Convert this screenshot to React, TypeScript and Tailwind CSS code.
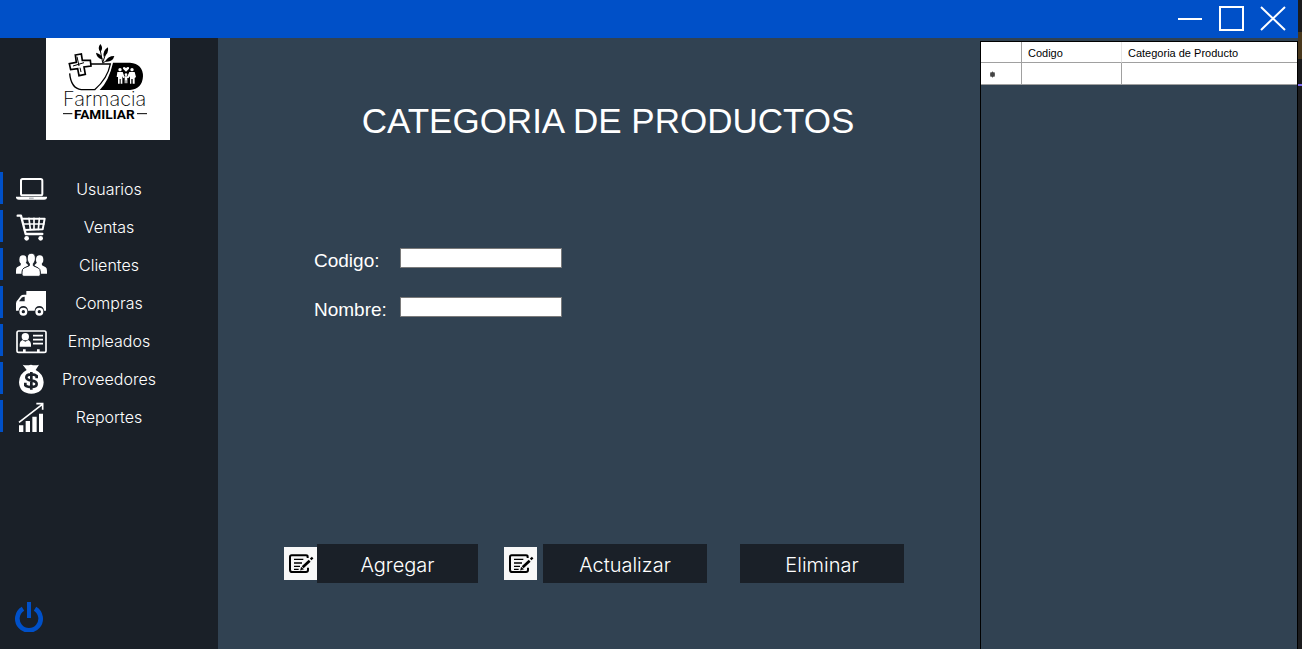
import type { ReactNode } from "react";

function Icon({ children }: { children: ReactNode }) {
  return (
    <svg viewBox="0 0 96 96" className="size-8 shrink-0" fill="#fff" aria-hidden="true">
      {children}
    </svg>
  );
}

const menu: { label: string; icon: ReactNode }[] = [
  {
    label: "Usuarios",
    icon: (
      <>
        <rect x="18" y="21" width="64" height="49" rx="5" fill="none" stroke="#fff" strokeWidth="6" />
        <path d="M3 74H96V77Q95 83 88 83H11Q4 83 3 77Z" />
        <path d="M42 77H56V80H42Z" fill="#9a9fa5" />
      </>
    ),
  },
  {
    label: "Ventas",
    icon: (
      <>
        <g fill="none" stroke="#fff" strokeWidth="7" strokeLinecap="round" strokeLinejoin="round">
          <path d="M8 17H18L32 72H82" />
          <path d="M22 26H89L83 58L29 60" strokeWidth="6" />
          <path d="M25 42H87M42 25L46 58M57 25V58M73 25L70 58" strokeWidth="5" />
        </g>
        <circle cx="35" cy="85" r="7" />
        <circle cx="77" cy="85" r="7" />
      </>
    ),
  },
  {
    label: "Clientes",
    icon: (
      <>
        <ellipse cx="24" cy="35" rx="11" ry="13" />
        <ellipse cx="74" cy="35" rx="11" ry="13" />
        <path d="M18 44L17 52L6 58Q3 61 3 68V77H28V62L40 52L33 45Z" />
        <path d="M80 44L81 52L92 58Q96 61 96 68V77H70V62L58 52L65 45Z" />
        <path
          d="M49 16C39 16 36 24 37 34C38 40 40 44 43 47V53L27 60Q21 63 21 72V81Q21 85 27 85H70Q76 85 76 81V72Q76 63 70 60L55 53V47C58 44 60 40 61 34C62 24 59 16 49 16Z"
          stroke="#1a2028"
          strokeWidth="3"
        />
      </>
    ),
  },
  {
    label: "Compras",
    icon: (
      <>
        <path d="M34 15H93V74H87A14 14 0 0 0 59 74H39A14 14 0 0 0 11 74H3V52Q4 45 8 42L17 30Q20 26 27 26H34Z" />
        <path d="M12 46L20 35Q23 32 29 32V46Z" fill="#1a2028" />
        <path
          fillRule="evenodd"
          d="M25 65A12 12 0 1 0 25 89A12 12 0 1 0 25 65ZM25 72A5 5 0 1 1 25 82A5 5 0 1 1 25 72ZM73 65A12 12 0 1 0 73 89A12 12 0 1 0 73 65ZM73 72A5 5 0 1 1 73 82A5 5 0 1 1 73 72Z"
        />
      </>
    ),
  },
  {
    label: "Empleados",
    icon: (
      <>
        <rect x="6" y="21" width="87" height="64" rx="5" fill="none" stroke="#fff" strokeWidth="5" />
        <circle cx="31" cy="38" r="11" />
        <path d="M22 48Q14 53 14 60V68H48V60Q48 53 40 48L31 53Z" />
        <path d="M54 35H84M54 47H84M54 59H84" stroke="#fff" strokeWidth="5" />
        <path d="M24 76H32V84H24ZM66 76H74V84H66Z" />
      </>
    ),
  },
  {
    label: "Proveedores",
    icon: (
      <>
        <path d="M23 8Q35 11 48 8Q60 11 72 8L62 24Q86 36 86 61Q84 95 49 95Q14 95 12 61Q12 36 35 24Z" />
        <path
          d="M65 49V42Q60 37 49 37Q34 37 34 46Q34 54 49 56Q65 58 65 66Q65 75 49 75Q36 75 31 70V62M49 30V83"
          fill="none"
          stroke="#1a2028"
          strokeWidth="8"
        />
      </>
    ),
  },
  {
    label: "Reportes",
    icon: (
      <>
        <path d="M12 76H25V96H12ZM32 63H45V96H32ZM52 50H65V96H52ZM72 41H84V96H72Z" />
        <path d="M12 67L81 14M64 11H83V29" fill="none" stroke="#fff" strokeWidth="5" />
      </>
    ),
  },
];

function Logo() {
  return (
    <svg viewBox="18 12 372 306" className="mx-auto h-[102px] w-[124px] bg-white" role="img" aria-label="Farmacia Familiar">
      <path d="M219 86H270Q309 90 309 127Q307 165 270 168H179Q207 140 219 86Z" />
      <path d="M153 90H211Q203 133 164 167H124Q93 163 89 118" fill="none" stroke="#000" strokeWidth="4" />
      <path
        d="M106 63L124 60L127 79L151 79L153 96L132 99L136 121L117 125L113 104L92 107L88 89L109 85Z"
        fill="#fff"
        stroke="#000"
        strokeWidth="5"
      />
      <path d="M111 68L117 96M132 86L99 96M123 114L120 101" fill="none" stroke="#000" strokeWidth="3" />
      <path d="M181 30Q171 43 181 54Q192 43 181 30ZM168 56Q170 74 188 76Q185 60 168 56ZM204 40Q188 49 191 68Q207 60 204 40ZM223 66Q202 66 196 83Q218 85 223 66Z" />
      <path d="M181 50L188 86L196 62M188 88L204 76" fill="none" stroke="#000" strokeWidth="3" />
      <g fill="#fff">
        <circle cx="240" cy="107" r="5" />
        <circle cx="276" cy="107" r="5" />
        <circle cx="258" cy="122" r="4" />
        <path d="M258 113L249 104Q248 98 253 99L258 102L263 99Q269 98 267 104Z" />
        <path d="M232 114H248L254 130L250 133L247 127V149H242V135H239V149H234V129H230ZM268 114H284L288 129L284 132V149H278V135H274V149H270V127L265 133L261 130ZM254 127H262V148H259V139H257V148H254Z" />
      </g>
      <text x="194" y="216" textAnchor="middle" fontSize="60" fontWeight="200" className="font-['Inter']">
        Farmacia
      </text>
      <text x="193" y="254" textAnchor="middle" fontSize="41" fontWeight="700" className="font-['Roboto']">
        FAMILIAR
      </text>
      <path d="M69 239H97M291 239H321" stroke="#000" strokeWidth="3" />
    </svg>
  );
}

function NoteIcon() {
  return (
    <svg viewBox="0 0 99 99" className="size-[33px] shrink-0 bg-[#f8f8f8]" fill="none" stroke="#000" aria-hidden="true">
      <path d="M71 33V29Q71 25 66 25H23Q18 25 18 30V68Q18 75 25 75H66Q72 75 72 69V62" strokeWidth="6" />
      <path d="M30 37H58M30 48H54M30 58H48M30 67H44" strokeWidth="4" />
      <path d="M56 61L77 41" strokeWidth="8" />
      <path d="M80 37L86 32" strokeWidth="7" />
      <path d="M49 70L52 60L59 67Z" fill="#000" />
    </svg>
  );
}

const actionClass = "h-[39px] bg-[#1a2028] pt-0.5 font-['Inter'] text-[20px] font-light text-white";

export default function App() {
  return (
    <div className="flex min-h-screen bg-[#1b1b1d] font-['Liberation_Sans',sans-serif]">
      <div className="flex min-w-0 flex-1 flex-col">
        <header className="flex h-[38px] items-center justify-end gap-4 bg-[#0050c8] pr-3">
          <button aria-label="Minimizar">
            <svg viewBox="0 0 26 26" className="size-[26px]" stroke="#fff" strokeWidth="2">
              <path d="M2 13H26" />
            </svg>
          </button>
          <button aria-label="Maximizar">
            <svg viewBox="0 0 26 26" className="size-[26px]" fill="none" stroke="#fff" strokeWidth="2">
              <path d="M2 1H25V24H2Z" />
            </svg>
          </button>
          <button aria-label="Cerrar">
            <svg viewBox="0 0 26 26" className="size-[26px]" stroke="#fff" strokeWidth="2">
              <path d="M1 1L25 24M25 1L1 24" />
            </svg>
          </button>
        </header>

        <div className="flex flex-1">
          <aside className="flex w-[218px] shrink-0 flex-col bg-[#1a2028]">
            <div className="pr-0.5">
              <Logo />
            </div>
            <nav className="mt-8 flex flex-col gap-1.5">
              {menu.map((item) => (
                <a
                  key={item.label}
                  href="#"
                  className="flex h-8 items-center border-l-[3px] border-[#0050c8] pl-3 font-['Inter'] text-[16px] font-light text-white"
                >
                  <Icon>{item.icon}</Icon>
                  <span className="w-[124px] pt-0.5 text-center">{item.label}</span>
                </a>
              ))}
            </nav>
            <button aria-label="Salir" className="mt-auto mb-[17px] ml-3.5 size-[30px]">
              <svg viewBox="0 0 90 90" className="size-full" fill="none" stroke="#0050c8">
                <path d="M27 20A35 35 0 1 0 63 20" strokeWidth="14" />
                <path d="M45 0V48" strokeWidth="12" />
              </svg>
            </button>
          </aside>

          <main className="flex min-w-0 flex-1 flex-col bg-[#314252] pr-12 pl-[66px] text-white">
            <h1 className="mt-[63px] text-center text-[35px] leading-10">CATEGORIA DE PRODUCTOS</h1>
            <form className="mt-[107px] flex flex-col gap-[29px] pl-[30px] text-[19px]">
              <div className="flex h-5 items-center">
                <label htmlFor="codigo" className="w-[86px] pt-1.5">
                  Codigo:
                </label>
                <input id="codigo" className="h-5 w-[162px] border border-[#7a7a7a] bg-white px-1 text-sm text-black" />
              </div>
              <div className="flex h-5 items-center">
                <label htmlFor="nombre" className="w-[86px] pt-1.5">
                  Nombre:
                </label>
                <input id="nombre" className="h-5 w-[162px] border border-[#7a7a7a] bg-white px-1 text-sm text-black" />
              </div>
            </form>
            <div className="mt-auto mb-[66px] flex items-center">
              <NoteIcon />
              <button className={`${actionClass} mr-[26px] w-[161px]`}>Agregar</button>
              <NoteIcon />
              <button className={`${actionClass} mr-[33px] ml-1.5 w-[164px]`}>Actualizar</button>
              <button className={`${actionClass} w-[164px]`}>Eliminar</button>
            </div>
          </main>

          <section className="flex w-[318px] shrink-0 flex-col bg-[#314252] pt-[3px]">
            <div className="flex-1 border-x border-t border-black">
              <table className="w-full table-fixed border-separate border-spacing-0 bg-white text-left text-[11px] text-black">
                <colgroup>
                  <col className="w-[41px]" />
                  <col className="w-[100px]" />
                  <col />
                </colgroup>
                <thead>
                  <tr className="h-[21px]">
                    <th className="border-r border-b border-[#a0a0a0] p-0" aria-label="Fila" />
                    <th className="border-r border-b border-r-[#e5e5e5] border-b-[#a0a0a0] p-0 pt-0.5 pl-1.5 font-normal">Codigo</th>
                    <th className="border-b border-[#a0a0a0] p-0 pt-0.5 pl-1.5 font-normal">Categoria de Producto</th>
                  </tr>
                </thead>
                <tbody>
                  <tr className="h-[22px]">
                    <td className="border-r border-b border-[#a0a0a0] p-0 pl-2">
                      <svg viewBox="0 0 7 7" className="mt-0.5 size-[7px]" stroke="#444" aria-hidden="true">
                        <circle cx="3.5" cy="3.5" r="2" fill="#444" />
                        <path d="M3.5 0.5V6.5M1 1.5L6 5.5M6 1.5L1 5.5" strokeWidth="0.8" />
                      </svg>
                    </td>
                    <td className="border-r border-b border-[#a0a0a0] p-0" />
                    <td className="border-b border-[#a0a0a0] p-0" />
                  </tr>
                </tbody>
              </table>
            </div>
          </section>
        </div>
      </div>
      <div className="flex w-1 shrink-0 flex-col pt-8">
        <div className="h-[27px] bg-[#49381d]" />
        <div className="mt-[25px] h-0.5 bg-[#7b68ee]" />
      </div>
    </div>
  );
}
